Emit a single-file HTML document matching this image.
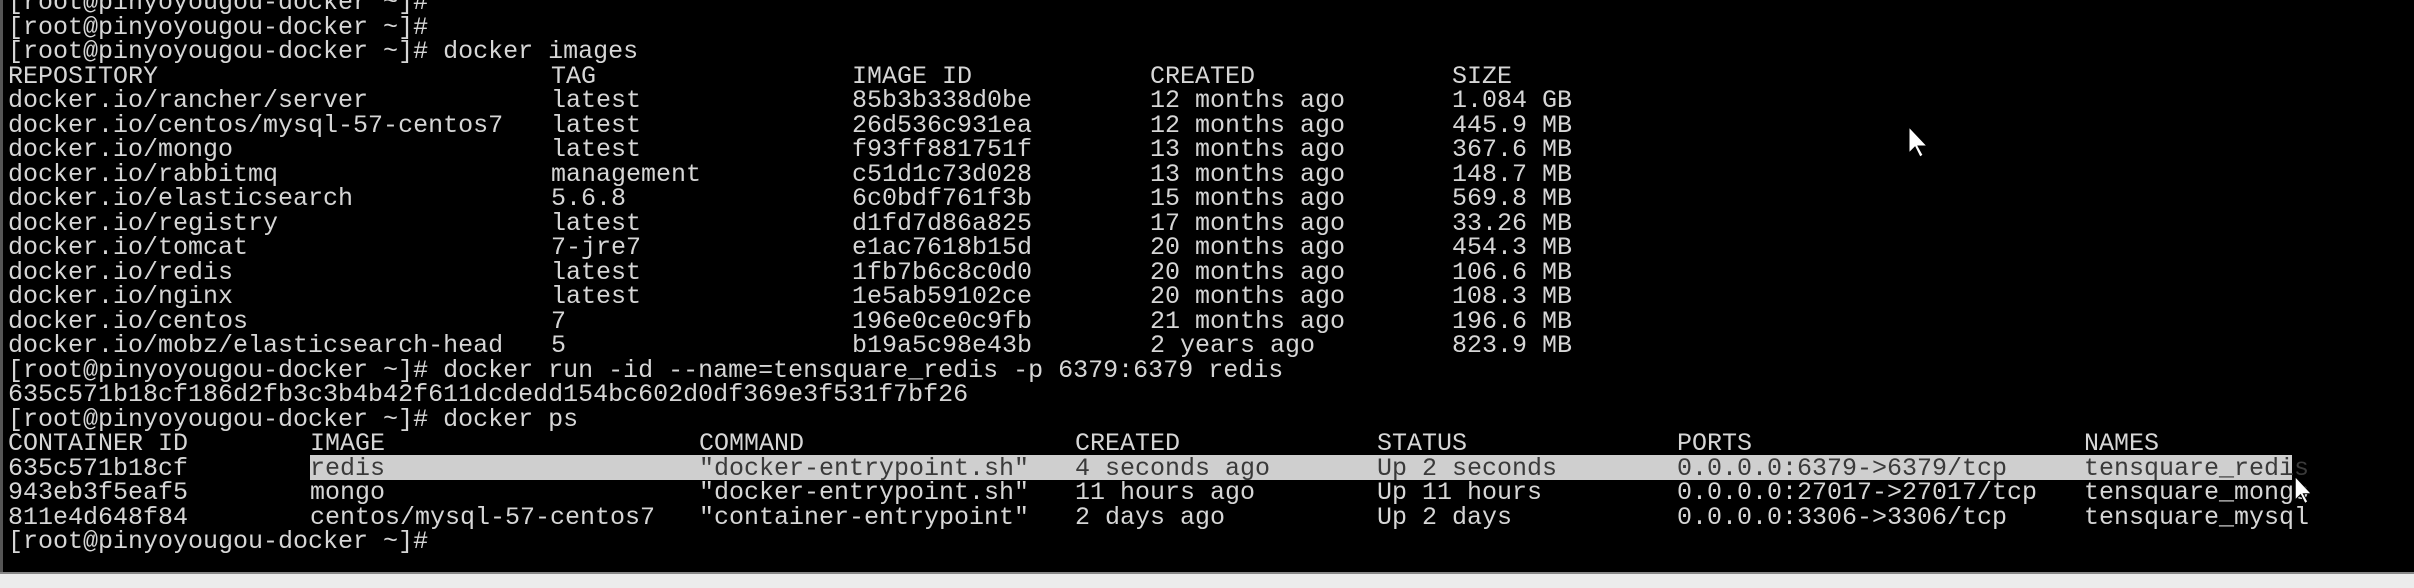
<!DOCTYPE html>
<html><head><meta charset="utf-8">
<style>
html,body{margin:0;padding:0;background:#000;}
#s{position:relative;width:2414px;height:588px;overflow:hidden;background:#000;
font-family:"Liberation Mono","DejaVu Sans Mono",monospace;font-size:25px;color:#d6d6d6;}
.l{position:absolute;left:0;height:24.5px;line-height:24.5px;white-space:pre;}
.c{position:absolute;top:0;white-space:pre;}
#hl{position:absolute;left:310px;top:455px;width:1982px;height:25px;background:#cfcfcf;}
.dk{color:#3a3a3a;}
#bot{position:absolute;left:0;top:572px;width:2414px;height:16px;background:#ececec;border-top:2px solid #888;}
#lb{position:absolute;left:0;top:0;width:3px;height:572px;background:#555;}
</style></head><body><div id="s">
<div id="lb"></div>
<div id="hl"></div>
<div class="l" style="top:-9px"><span class="c" style="left:8px">[root@pinyoyougou-docker ~]#</span></div>
<div class="l" style="top:15.5px"><span class="c" style="left:8px">[root@pinyoyougou-docker ~]#</span></div>
<div class="l" style="top:40px"><span class="c" style="left:8px">[root@pinyoyougou-docker ~]# docker images</span></div>
<div class="l" style="top:64.5px"><span class="c" style="left:8px">REPOSITORY</span><span class="c" style="left:551px">TAG</span><span class="c" style="left:852px">IMAGE ID</span><span class="c" style="left:1150px">CREATED</span><span class="c" style="left:1452px">SIZE</span></div>
<div class="l" style="top:89px"><span class="c" style="left:8px">docker.io/rancher/server</span><span class="c" style="left:551px">latest</span><span class="c" style="left:852px">85b3b338d0be</span><span class="c" style="left:1150px">12 months ago</span><span class="c" style="left:1452px">1.084 GB</span></div>
<div class="l" style="top:113.5px"><span class="c" style="left:8px">docker.io/centos/mysql-57-centos7</span><span class="c" style="left:551px">latest</span><span class="c" style="left:852px">26d536c931ea</span><span class="c" style="left:1150px">12 months ago</span><span class="c" style="left:1452px">445.9 MB</span></div>
<div class="l" style="top:138px"><span class="c" style="left:8px">docker.io/mongo</span><span class="c" style="left:551px">latest</span><span class="c" style="left:852px">f93ff881751f</span><span class="c" style="left:1150px">13 months ago</span><span class="c" style="left:1452px">367.6 MB</span></div>
<div class="l" style="top:162.5px"><span class="c" style="left:8px">docker.io/rabbitmq</span><span class="c" style="left:551px">management</span><span class="c" style="left:852px">c51d1c73d028</span><span class="c" style="left:1150px">13 months ago</span><span class="c" style="left:1452px">148.7 MB</span></div>
<div class="l" style="top:187px"><span class="c" style="left:8px">docker.io/elasticsearch</span><span class="c" style="left:551px">5.6.8</span><span class="c" style="left:852px">6c0bdf761f3b</span><span class="c" style="left:1150px">15 months ago</span><span class="c" style="left:1452px">569.8 MB</span></div>
<div class="l" style="top:211.5px"><span class="c" style="left:8px">docker.io/registry</span><span class="c" style="left:551px">latest</span><span class="c" style="left:852px">d1fd7d86a825</span><span class="c" style="left:1150px">17 months ago</span><span class="c" style="left:1452px">33.26 MB</span></div>
<div class="l" style="top:236px"><span class="c" style="left:8px">docker.io/tomcat</span><span class="c" style="left:551px">7-jre7</span><span class="c" style="left:852px">e1ac7618b15d</span><span class="c" style="left:1150px">20 months ago</span><span class="c" style="left:1452px">454.3 MB</span></div>
<div class="l" style="top:260.5px"><span class="c" style="left:8px">docker.io/redis</span><span class="c" style="left:551px">latest</span><span class="c" style="left:852px">1fb7b6c8c0d0</span><span class="c" style="left:1150px">20 months ago</span><span class="c" style="left:1452px">106.6 MB</span></div>
<div class="l" style="top:285px"><span class="c" style="left:8px">docker.io/nginx</span><span class="c" style="left:551px">latest</span><span class="c" style="left:852px">1e5ab59102ce</span><span class="c" style="left:1150px">20 months ago</span><span class="c" style="left:1452px">108.3 MB</span></div>
<div class="l" style="top:309.5px"><span class="c" style="left:8px">docker.io/centos</span><span class="c" style="left:551px">7</span><span class="c" style="left:852px">196e0ce0c9fb</span><span class="c" style="left:1150px">21 months ago</span><span class="c" style="left:1452px">196.6 MB</span></div>
<div class="l" style="top:334px"><span class="c" style="left:8px">docker.io/mobz/elasticsearch-head</span><span class="c" style="left:551px">5</span><span class="c" style="left:852px">b19a5c98e43b</span><span class="c" style="left:1150px">2 years ago</span><span class="c" style="left:1452px">823.9 MB</span></div>
<div class="l" style="top:358.5px"><span class="c" style="left:8px">[root@pinyoyougou-docker ~]# docker run -id --name=tensquare_redis -p 6379:6379 redis</span></div>
<div class="l" style="top:383px"><span class="c" style="left:8px">635c571b18cf186d2fb3c3b4b42f611dcdedd154bc602d0df369e3f531f7bf26</span></div>
<div class="l" style="top:407.5px"><span class="c" style="left:8px">[root@pinyoyougou-docker ~]# docker ps</span></div>
<div class="l" style="top:432px"><span class="c" style="left:8px">CONTAINER ID</span><span class="c" style="left:310px">IMAGE</span><span class="c" style="left:699px">COMMAND</span><span class="c" style="left:1075px">CREATED</span><span class="c" style="left:1377px">STATUS</span><span class="c" style="left:1677px">PORTS</span><span class="c" style="left:2084px">NAMES</span></div>
<div class="l" style="top:456.5px"><span class="c" style="left:8px">635c571b18cf</span><span class="c dk" style="left:310px">redis</span><span class="c dk" style="left:699px">"docker-entrypoint.sh"</span><span class="c dk" style="left:1075px">4 seconds ago</span><span class="c dk" style="left:1377px">Up 2 seconds</span><span class="c dk" style="left:1677px">0.0.0.0:6379-&gt;6379/tcp</span><span class="c dk" style="left:2084px">tensquare_redis</span></div>
<div class="l" style="top:481px"><span class="c" style="left:8px">943eb3f5eaf5</span><span class="c" style="left:310px">mongo</span><span class="c" style="left:699px">"docker-entrypoint.sh"</span><span class="c" style="left:1075px">11 hours ago</span><span class="c" style="left:1377px">Up 11 hours</span><span class="c" style="left:1677px">0.0.0.0:27017-&gt;27017/tcp</span><span class="c" style="left:2084px">tensquare_mongo</span></div>
<div class="l" style="top:505.5px"><span class="c" style="left:8px">811e4d648f84</span><span class="c" style="left:310px">centos/mysql-57-centos7</span><span class="c" style="left:699px">"container-entrypoint"</span><span class="c" style="left:1075px">2 days ago</span><span class="c" style="left:1377px">Up 2 days</span><span class="c" style="left:1677px">0.0.0.0:3306-&gt;3306/tcp</span><span class="c" style="left:2084px">tensquare_mysql</span></div>
<div class="l" style="top:530px"><span class="c" style="left:8px">[root@pinyoyougou-docker ~]#</span></div>
<svg style="position:absolute;left:1908px;top:126px" width="24" height="34" viewBox="0 0 24 34"><path d="M1 1 L1 27 L7 21 L12 31 L15 29 L10 20 L19 20 Z" fill="#fff" stroke="#000" stroke-width="1"/></svg>
<svg style="position:absolute;left:2294px;top:476px" width="22" height="30" viewBox="0 0 24 34"><path d="M1 1 L1 27 L7 21 L12 31 L15 29 L10 20 L19 20 Z" fill="#fff" stroke="#000" stroke-width="1"/></svg>
<div id="bot"></div>
</div></body></html>
